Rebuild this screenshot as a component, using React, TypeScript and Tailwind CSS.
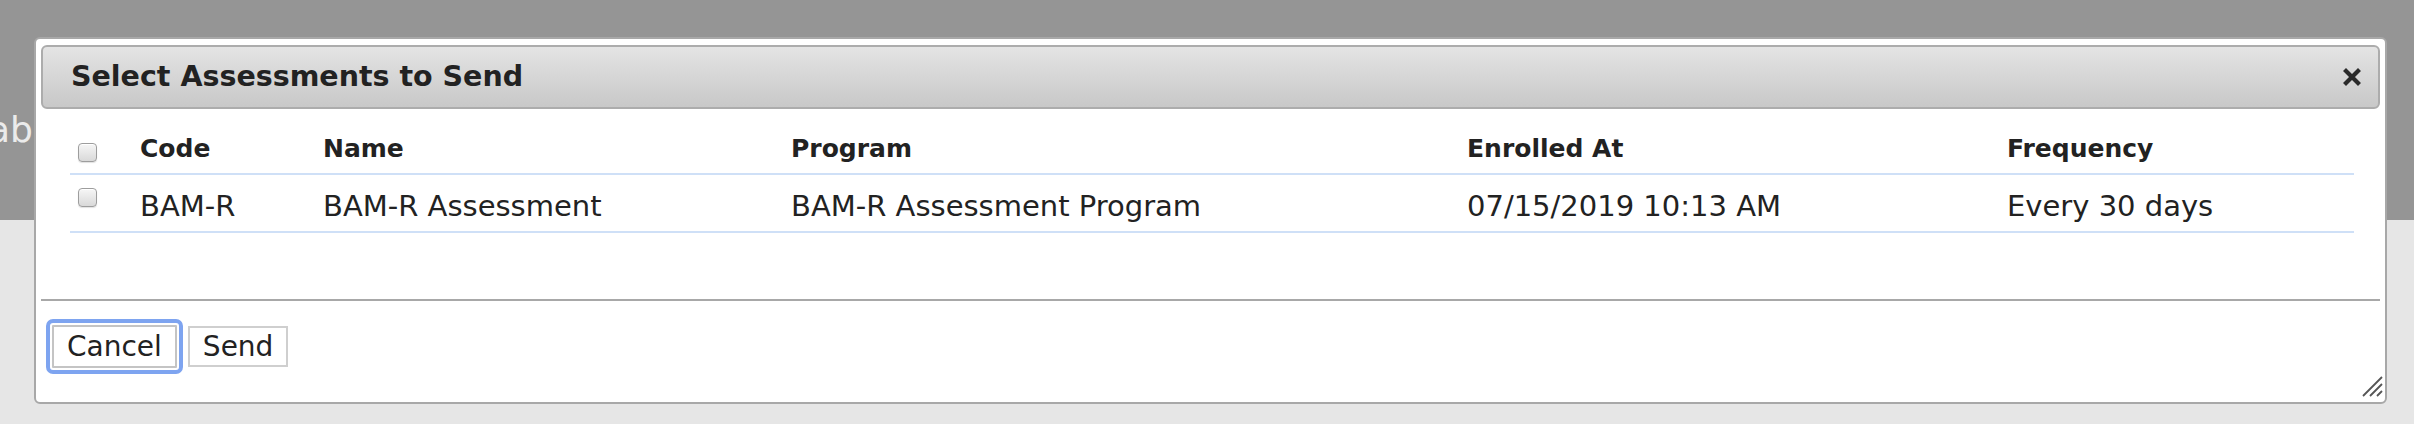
import { useState } from "react";

// Rows shown in the assessments dialog
const ASSESSMENTS = [
  {
    id: 1,
    code: "BAM-R",
    name: "BAM-R Assessment",
    program: "BAM-R Assessment Program",
    enrolledAt: "07/15/2019 10:13 AM",
    frequency: "Every 30 days",
  },
];

const GRID = "grid grid-cols-[62px_183px_468px_676px_540px_1fr]";

const Checkbox = ({ checked, onChange, className = "" }: { checked: boolean; onChange: () => void; className?: string }) => (
  <button
    type="button"
    onClick={onChange}
    className={`w-[19px] h-[19px] rounded-[4px] border border-[#9d9d9d] bg-gradient-to-b from-[#f6f6f6] to-[#d9d9d9] shadow-[inset_0_1px_0_#ffffff,0_1px_1px_rgba(0,0,0,0.12)] flex items-center justify-center ${className}`}
  >
    {checked && (
      <svg width="13" height="13" viewBox="0 0 13 13">
        <path d="M2 7l3 3 6-7" fill="none" stroke="#333" strokeWidth="2" />
      </svg>
    )}
  </button>
);

const CloseIcon = () => (
  <svg width="18" height="18" viewBox="0 0 18 18">
    <path d="M3 3L15 15M15 3L3 15" stroke="#2a2a2a" strokeWidth="4.2" strokeLinecap="square" />
  </svg>
);

const ResizeGrip = () => (
  <svg width="22" height="21" viewBox="0 0 22 21">
    <path d="M1 20L20 1M8 20L20 8M15 20L20 15" stroke="#555" strokeWidth="1.8" />
  </svg>
);

export default function App() {
  const [selected, setSelected] = useState<number[]>([]);

  const allSelected = selected.length === ASSESSMENTS.length;

  const toggleAll = () => setSelected(allSelected ? [] : ASSESSMENTS.map((a) => a.id));
  const toggleOne = (id: number) =>
    setSelected((prev) => (prev.includes(id) ? prev.filter((x) => x !== id) : [...prev, id]));

  return (
    <div className="relative w-[2414px] h-[424px] overflow-hidden font-['DejaVu_Sans',sans-serif] text-[#222]">
      {/* Page behind the dialog */}
      <div className="h-[220px] bg-[#959595] overflow-hidden">
        <div className="mt-[112px] -ml-[12px] text-[36px] leading-[36px] text-[#ebebeb]">ab</div>
      </div>
      <div className="h-[204px] bg-[#e6e6e6]" />

      {/* Dialog */}
      <div className="absolute left-[34px] top-[37px] w-[2353px] h-[367px] bg-white border-2 border-[#a8a8a8] rounded-[6px] px-[5px] pt-[6px] flex flex-col">
        {/* Title bar */}
        <div className="h-[64px] shrink-0 flex items-center justify-between border-2 border-[#acacac] rounded-[6px] bg-gradient-to-b from-[#e4e4e4] to-[#c8c8c8] pl-[28px] pr-[17px]">
          <span className="text-[28.5px] font-bold leading-none pt-[1px]">Select Assessments to Send</span>
          <button type="button" className="flex items-center">
            <CloseIcon />
          </button>
        </div>

        {/* Table */}
        <div className="h-[190px] shrink-0 pt-[15px] pl-[29px] pr-[26px]">
          <div className={`${GRID} h-[51px] border-b-2 border-[#cfe0f7] items-center text-[25px] font-bold leading-[30px]`}>
            <div className="px-[8px] pt-[7px]">
              <Checkbox checked={allSelected} onChange={toggleAll} />
            </div>
            <div className="px-[8px]">Code</div>
            <div className="px-[8px]">Name</div>
            <div className="px-[8px]">Program</div>
            <div className="px-[8px]">Enrolled At</div>
            <div className="px-[8px]">Frequency</div>
          </div>
          {ASSESSMENTS.map((a) => (
            <div key={a.id} className={`${GRID} h-[58px] pt-[6px] border-b-2 border-[#cfe0f7] items-center text-[29px] leading-[34px]`}>
              <div className="px-[8px] self-start pt-[7px]">
                <Checkbox checked={selected.includes(a.id)} onChange={() => toggleOne(a.id)} />
              </div>
              <div className="px-[8px]">{a.code}</div>
              <div className="px-[8px]">{a.name}</div>
              <div className="px-[8px]">{a.program}</div>
              <div className="px-[8px]">{a.enrolledAt}</div>
              <div className="px-[8px]">{a.frequency}</div>
            </div>
          ))}
        </div>

        {/* Button pane */}
        <div className="border-t-2 border-[#a8a8a8] pt-[24px] pl-[11px] flex gap-[11px] text-[28px]">
          <button
            type="button"
            className="h-[43px] px-[13px] border-2 border-[#c4c4c4] bg-white leading-none rounded-[1px] outline-[4px] outline-solid outline-[#7ea4f0] outline-offset-[2px]"
          >
            Cancel
          </button>
          <button type="button" className="h-[41px] mt-[1px] px-[13px] border-2 border-[#cfcfcf] bg-white leading-none">
            Send
          </button>
        </div>

        <div className="absolute right-[1px] bottom-[5px]">
          <ResizeGrip />
        </div>
      </div>
    </div>
  );
}
